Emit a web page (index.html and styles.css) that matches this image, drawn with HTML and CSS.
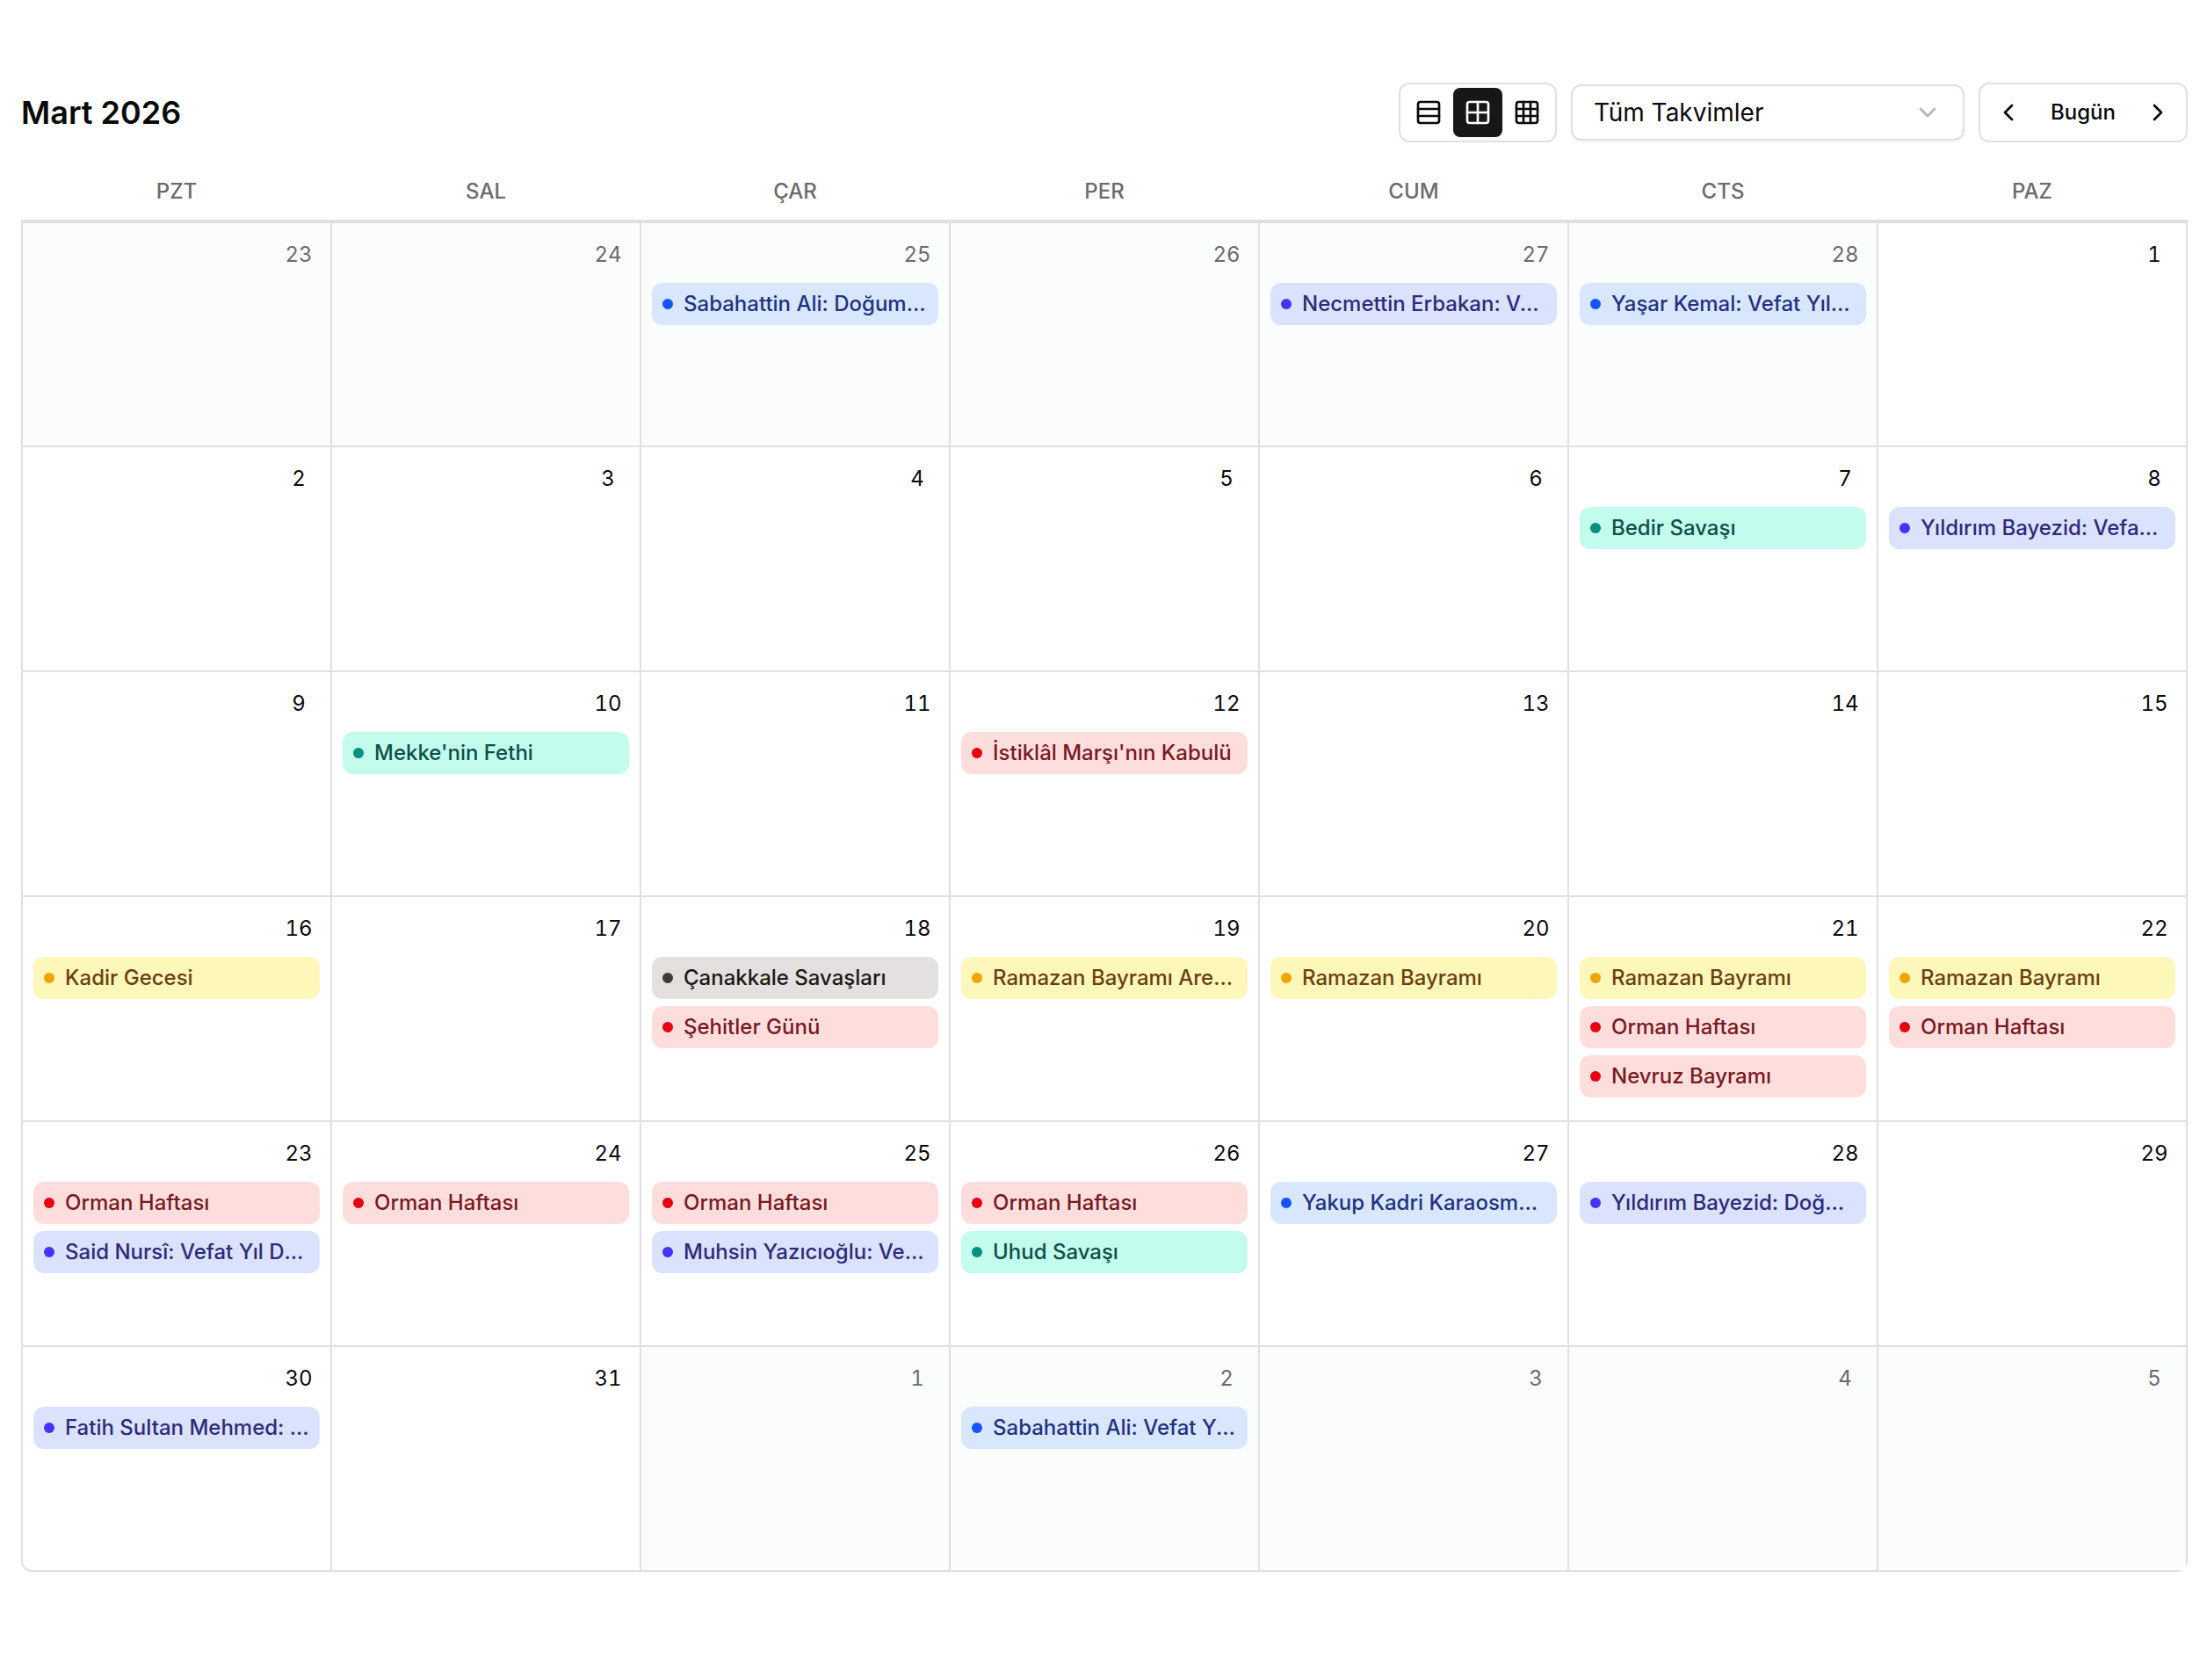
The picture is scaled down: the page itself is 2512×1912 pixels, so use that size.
FILE: index.html
```html
<!DOCTYPE html>
<html lang="tr">

<head>
    <meta charset="utf-8">
    <title>Takvim - Mart 2026</title>
    <meta name="viewport" content="width=device-width, initial-scale=1">
    <link rel="stylesheet" href="styles.css">
</head>

<body>
<main class="calendar">
    <header class="toolbar">
        <h1>Mart 2026</h1>

        <div class="group">
            <button class="icon-button" type="button" aria-label="Hafta">
                <svg viewBox="0 0 24 24"><rect x="3" y="3" width="18" height="18" rx="2"/><path d="M21 9H3M21 15H3"/></svg>
            </button>
            <button class="icon-button active" type="button" aria-label="Ay">
                <svg viewBox="0 0 24 24"><rect x="3" y="3" width="18" height="18" rx="2"/><path d="M3 12h18M12 3v18"/></svg>
            </button>
            <button class="icon-button" type="button" aria-label="Yıl">
                <svg viewBox="0 0 24 24"><rect x="3" y="3" width="18" height="18" rx="2"/><path d="M3 9h18M3 15h18M9 3v18M15 3v18"/></svg>
            </button>
        </div>

        <div class="filter">
            <select aria-label="Takvim seçimi">
                <option>Tüm Takvimler</option>
            </select>
            <svg viewBox="0 0 24 24"><path d="m6 9 6 6 6-6"/></svg>
        </div>

        <div class="group">
            <button class="icon-button" type="button" aria-label="Önceki ay">
                <svg viewBox="0 0 24 24"><path d="m15 18-6-6 6-6"/></svg>
            </button>
            <button class="today" type="button">Bugün</button>
            <button class="icon-button" type="button" aria-label="Sonraki ay">
                <svg viewBox="0 0 24 24"><path d="m9 18 6-6-6-6"/></svg>
            </button>
        </div>
    </header>

    <div class="month">
        <table>
            <thead>
            <tr>
                <th>PZT</th>
                <th>SAL</th>
                <th>ÇAR</th>
                <th>PER</th>
                <th>CUM</th>
                <th>CTS</th>
                <th>PAZ</th>
            </tr>
            </thead>
            <tbody>
            <tr>
                <td class="outside"><span class="day">23</span></td>
                <td class="outside"><span class="day">24</span></td>
                <td class="outside">
                    <span class="day">25</span>
                    <button class="event blue"><span>Sabahattin Ali: Doğum Yıl Dönümü</span></button>
                </td>
                <td class="outside"><span class="day">26</span></td>
                <td class="outside">
                    <span class="day">27</span>
                    <button class="event indigo"><span>Necmettin Erbakan: Vefat Yıl Dönümü</span></button>
                </td>
                <td class="outside">
                    <span class="day">28</span>
                    <button class="event blue"><span>Yaşar Kemal: Vefat Yıl Dönümü</span></button>
                </td>
                <td><span class="day">1</span></td>
            </tr>
            <tr>
                <td><span class="day">2</span></td>
                <td><span class="day">3</span></td>
                <td><span class="day">4</span></td>
                <td><span class="day">5</span></td>
                <td><span class="day">6</span></td>
                <td>
                    <span class="day">7</span>
                    <button class="event teal"><span>Bedir Savaşı</span></button>
                </td>
                <td>
                    <span class="day">8</span>
                    <button class="event indigo"><span>Yıldırım Bayezid: Vefat Yıl Dönümü</span></button>
                </td>
            </tr>
            <tr>
                <td><span class="day">9</span></td>
                <td>
                    <span class="day">10</span>
                    <button class="event teal"><span>Mekke'nin Fethi</span></button>
                </td>
                <td><span class="day">11</span></td>
                <td>
                    <span class="day">12</span>
                    <button class="event red"><span>İstiklâl Marşı'nın Kabulü</span></button>
                </td>
                <td><span class="day">13</span></td>
                <td><span class="day">14</span></td>
                <td><span class="day">15</span></td>
            </tr>
            <tr>
                <td>
                    <span class="day">16</span>
                    <button class="event yellow"><span>Kadir Gecesi</span></button>
                </td>
                <td><span class="day">17</span></td>
                <td>
                    <span class="day">18</span>
                    <button class="event stone"><span>Çanakkale Savaşları</span></button>
                    <button class="event red"><span>Şehitler Günü</span></button>
                </td>
                <td>
                    <span class="day">19</span>
                    <button class="event yellow"><span>Ramazan Bayramı Arefesi</span></button>
                </td>
                <td>
                    <span class="day">20</span>
                    <button class="event yellow"><span>Ramazan Bayramı</span></button>
                </td>
                <td>
                    <span class="day">21</span>
                    <button class="event yellow"><span>Ramazan Bayramı</span></button>
                    <button class="event red"><span>Orman Haftası</span></button>
                    <button class="event red"><span>Nevruz Bayramı</span></button>
                </td>
                <td>
                    <span class="day">22</span>
                    <button class="event yellow"><span>Ramazan Bayramı</span></button>
                    <button class="event red"><span>Orman Haftası</span></button>
                </td>
            </tr>
            <tr>
                <td>
                    <span class="day">23</span>
                    <button class="event red"><span>Orman Haftası</span></button>
                    <button class="event indigo"><span>Said Nursî: Vefat Yıl Dönümü</span></button>
                </td>
                <td>
                    <span class="day">24</span>
                    <button class="event red"><span>Orman Haftası</span></button>
                </td>
                <td>
                    <span class="day">25</span>
                    <button class="event red"><span>Orman Haftası</span></button>
                    <button class="event indigo"><span>Muhsin Yazıcıoğlu: Vefat Yıl Dönümü</span></button>
                </td>
                <td>
                    <span class="day">26</span>
                    <button class="event red"><span>Orman Haftası</span></button>
                    <button class="event teal"><span>Uhud Savaşı</span></button>
                </td>
                <td>
                    <span class="day">27</span>
                    <button class="event blue"><span>Yakup Kadri Karaosmanoğlu: Doğum Yıl Dönümü</span></button>
                </td>
                <td>
                    <span class="day">28</span>
                    <button class="event indigo"><span>Yıldırım Bayezid: Doğum Yıl Dönümü</span></button>
                </td>
                <td><span class="day">29</span></td>
            </tr>
            <tr>
                <td>
                    <span class="day">30</span>
                    <button class="event indigo"><span>Fatih Sultan Mehmed: Doğum Yıl Dönümü</span></button>
                </td>
                <td><span class="day">31</span></td>
                <td class="outside"><span class="day">1</span></td>
                <td class="outside">
                    <span class="day">2</span>
                    <button class="event blue"><span>Sabahattin Ali: Vefat Yıl Dönümü</span></button>
                </td>
                <td class="outside"><span class="day">3</span></td>
                <td class="outside"><span class="day">4</span></td>
                <td class="outside"><span class="day">5</span></td>
            </tr>
            </tbody>
        </table>
    </div>
</main>
</body>

</html>
```
FILE: styles.css
```css
* {
    box-sizing: border-box;
}

body {
    margin: 0;
    background: #fff;
    color: #0a0a0a;
    font-family: Inter, "Liberation Sans", sans-serif;
    font-size: 24px;
    line-height: 32px;
}

button, select {
    margin: 0;
    border: 0;
    background: none;
    color: inherit;
    font: inherit;
    cursor: pointer;
}

.calendar {
    padding: 94px 22px 94px 24px;
}

.toolbar {
    display: flex;
    align-items: center;
    gap: 16px;
    margin-bottom: 22px;
}

h1 {
    flex: 1;
    margin: 0;
    font-size: 36px;
    line-height: 48px;
    font-weight: 600;
}

svg {
    display: block;
    width: 32px;
    height: 32px;
    fill: none;
    stroke: currentColor;
    stroke-width: 2;
    stroke-linecap: round;
    stroke-linejoin: round;
}

.group {
    display: flex;
    padding: 4px;
    border: 2px solid #e0e0e0;
    border-radius: 12px;
}

.icon-button {
    display: flex;
    align-items: center;
    justify-content: center;
    width: 56px;
    height: 56px;
    padding: 0;
    border-radius: 8px;
}

.icon-button.active {
    background: #171717;
    color: #fff;
    box-shadow: 0 2px 4px rgba(0, 0, 0, 0.05);
}

.today {
    width: 114px;
    height: 56px;
    padding: 0;
    font-weight: 500;
}

.filter {
    position: relative;
    width: 448px;
}

.filter select {
    display: block;
    width: 100%;
    height: 64px;
    padding: 0 64px 0 24px;
    border: 2px solid #e0e0e0;
    border-radius: 12px;
    background: #fff;
    box-shadow: 0 2px 4px rgba(0, 0, 0, 0.05);
    font-size: 28px;
    appearance: none;
}

.filter svg {
    position: absolute;
    top: 16px;
    right: 26px;
    color: #b4b4b4;
    pointer-events: none;
}

.month {
    position: relative;
    overflow: hidden;
    border-radius: 0 0 12px 12px;
}

/* collapsed table borders can't be rounded, so draw the corner on top */
.month::after {
    content: "";
    position: absolute;
    left: 0;
    bottom: 0;
    width: 24px;
    height: 24px;
    border-left: 2px solid #e0e0e0;
    border-bottom: 2px solid #e0e0e0;
    border-bottom-left-radius: 12px;
    pointer-events: none;
}

table {
    width: 100%;
    table-layout: fixed;
    border-collapse: collapse;
}

th {
    height: 68px;
    padding: 2px 0 0;
    border-bottom: 4px solid #e0e0e0;
    color: #6b6b6b;
    font-weight: 500;
}

td {
    height: 256px;
    padding: 12px;
    border: 2px solid #e0e0e0;
    vertical-align: top;
}

.outside {
    background: #fbfdfc;
}

.day {
    display: block;
    width: 48px;
    margin-left: auto;
    line-height: 48px;
    text-align: center;
    font-variant-numeric: tabular-nums;
}

.outside .day {
    color: #6b6b6b;
}

.event {
    display: flex;
    align-items: center;
    gap: 12px;
    width: 100%;
    height: 48px;
    margin-top: 8px;
    padding: 0 12px;
    border-radius: 12px;
    font-weight: 500;
    text-align: left;
}

.event::before {
    content: "";
    flex: none;
    width: 12px;
    height: 12px;
    border-radius: 50%;
    background: var(--dot);
}

.event span {
    overflow: hidden;
    white-space: nowrap;
    text-overflow: ellipsis;
}

.blue {
    --dot: #1653ff;
    background: #d8e7fd;
    color: #1f327f;
}

.indigo {
    --dot: #4632f8;
    background: #dbe2fe;
    color: #2d2a78;
}

.teal {
    --dot: #009080;
    background: #c3fbed;
    color: #0b4f4a;
}

.red {
    --dot: #e60012;
    background: #fddedd;
    color: #781a22;
}

.yellow {
    --dot: #f0a400;
    background: #fef7ba;
    color: #6b3f12;
}

.stone {
    --dot: #3f3c37;
    background: #e4e0df;
    color: #1c1917;
}
```
